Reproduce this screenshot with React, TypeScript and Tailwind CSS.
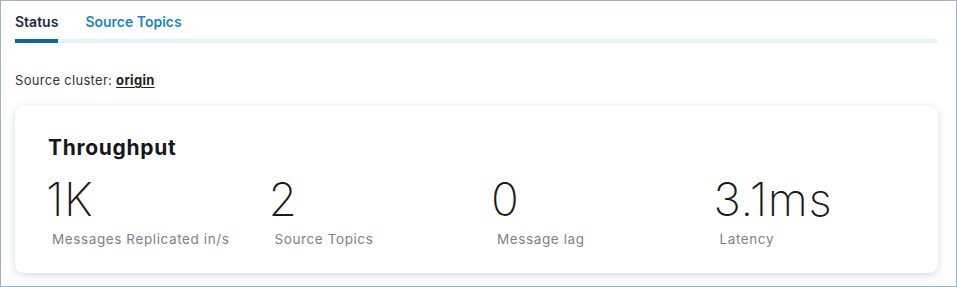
import React from "react";

const stats = [
  { value: "1K", label: "Messages Replicated in/s" },
  { value: "2", label: "Source Topics" },
  { value: "0", label: "Message lag" },
  { value: "3.1ms", label: "Latency" },
];

export default function App() {
  return (
    <div
      className="w-[957px] h-[287px] border border-[#9ab3c1] bg-white overflow-hidden"
      style={{ fontFamily: "Inter, 'Noto Sans', sans-serif" }}
    >
      <div className="pl-[14px] pr-[18px]">
        <div className="flex pt-[12px] border-b-4 border-[#e4f2fa] relative">
          <div className="text-[14px] font-semibold text-[#1c2b40] pb-[8px] border-b-4 border-[#0a6c96] -mb-[4px] leading-[18px]">
            Status
          </div>
          <div className="ml-[27px] text-[14px] font-semibold text-[#1d88b8] leading-[18px]">
            Source Topics
          </div>
        </div>
        <div className="mt-[29px] text-[13px] text-[#333] tracking-[0.3px] leading-[16px]">
          Source cluster:{" "}
          <span className="font-bold underline text-[#222] underline-offset-2">origin</span>
        </div>
        <div className="mt-[18px] rounded-[9px] bg-white shadow-[0_2px_8px_rgba(40,50,90,0.18)] h-[167px] pl-[33px] pt-[30px]">
          <div className="text-[21px] font-bold text-[#16161e] leading-[24px] tracking-[0.7px]">Throughput</div>
          <div className="grid grid-cols-4 w-[890px] mt-[12px]">
            {stats.map((s) => (
              <div key={s.label} className="flex flex-col">
                <div className="text-[46px] font-extralight text-[#1a1a1a] leading-[54px] tracking-[0.6px] -ml-[2px]">
                  {s.value}
                </div>
                <div className="text-[13.5px] text-[#80808a] tracking-[0.6px] pl-[4px] leading-[18px] mt-[4px]">
                  {s.label}
                </div>
              </div>
            ))}
          </div>
        </div>
      </div>
    </div>
  );
}
